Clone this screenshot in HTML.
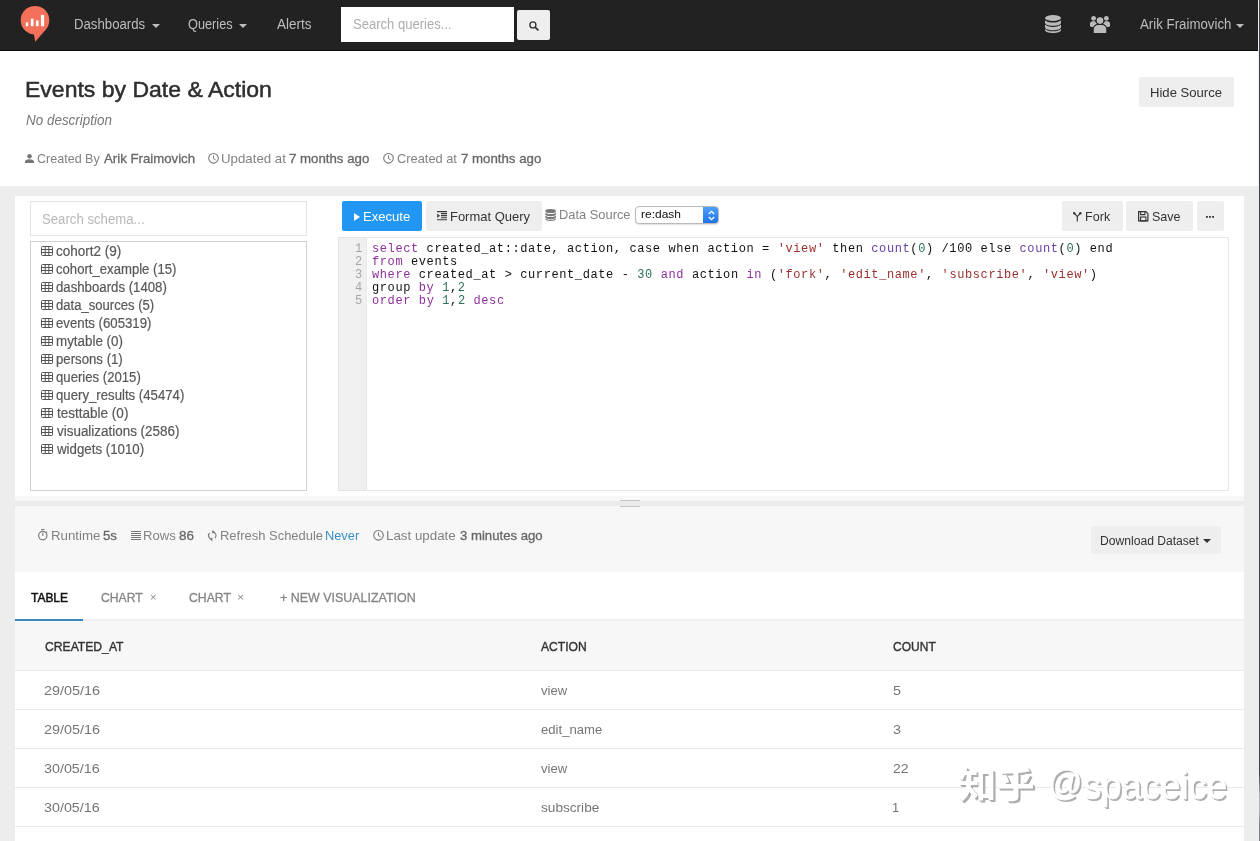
<!DOCTYPE html>
<html lang="en">
<head>
<meta charset="utf-8">
<title>Events by Date &amp; Action</title>
<style>
*{box-sizing:border-box}
html,body{margin:0;padding:0}
body{width:1260px;height:841px;overflow:hidden;position:relative;background:#ededed;font-family:"Liberation Sans",sans-serif;font-size:13px;color:#333}
.a{position:absolute}
.t{position:absolute;white-space:nowrap;line-height:1;transform-origin:0 0}
.m{-webkit-text-stroke:.35px currentColor}
svg{position:absolute;overflow:visible}
.caret{position:absolute;width:0;height:0;border-left:4px solid transparent;border-right:4px solid transparent;border-top:4px solid #bdbdbd}
.btn{position:absolute;background:#eee;border-radius:2px}
.code{position:absolute;left:372px;white-space:pre;font-family:"Liberation Mono",monospace;font-size:12px;letter-spacing:.6px;line-height:13px;color:#111}
.ln{position:absolute;left:338px;width:24.300px;text-align:right;font-family:"Liberation Mono",monospace;font-size:12px;line-height:13px;color:#a6a6a6}
.kw{color:#8f2f9c}.str{color:#9a2f2f}.num{color:#2c6f55}.fn{color:#6a3d9f}
.row{position:absolute;left:15px;width:1229px;height:1px;background:#e9e9e9}
</style>
</head>
<body>
<div id="app" style="position:absolute;left:0;top:0;width:1260px;height:841px;will-change:transform">
<div class="a" style="left:0;top:0;width:1258px;height:51px;background:#222;border-bottom:1px solid #080808"></div>
<svg style="left:19px;top:5px" width="32" height="38" viewBox="0 0 32 38">
<circle cx="16" cy="15.200" r="14.300" fill="#f3705b"/><path d="M14.700 28.500L16.300 36.700 27.200 24z" fill="#f3705b"/>
<rect x="6.800" y="17.300" width="2.400" height="3.900" fill="#fff"/><rect x="11.800" y="13.700" width="2.700" height="7.500" fill="#fff"/>
<rect x="16.900" y="15.500" width="2.700" height="5.700" fill="#fff"/><rect x="21.900" y="9.900" width="3.200" height="11.300" fill="#fff"/></svg>
<span class="t" id="t0" style="left:73.82px;top:17.15px;font-size:14px;color:#bdbdbd;transform:scaleX(0.9424);">Dashboards</span>
<i class="caret" style="left:151.700px;top:23.500px"></i>
<span class="t" id="t1" style="left:187.82px;top:17.15px;font-size:14px;color:#bdbdbd;transform:scaleX(0.9110);">Queries</span>
<i class="caret" style="left:238.700px;top:23.500px"></i>
<span class="t" id="t2" style="left:276.50px;top:17.15px;font-size:14px;color:#bdbdbd;transform:scaleX(0.9645);">Alerts</span>
<div class="a" style="left:341px;top:7px;width:173px;height:35px;background:#fff"></div>
<span class="t" id="t3" style="left:353.30px;top:17.15px;font-size:14px;color:#adadad;transform:scaleX(0.9325);">Search queries...</span>
<div class="btn" style="left:517px;top:10px;width:33px;height:30px"></div>
<svg style="left:528.500px;top:20.500px" width="10" height="10" viewBox="0 0 10 10"><circle cx="3.900" cy="3.900" r="3" fill="none" stroke="#333" stroke-width="1.350"/><path d="M6.100 6.100L9.400 9.400" stroke="#333" stroke-width="1.700"/></svg>
<svg style="left:1045.00px;top:14.50px" width="16" height="18" viewBox="0 0 16 18"><g fill="#bbb"><ellipse cx="8" cy="3" rx="8" ry="3"/><path d="M0 5.200c1.500 1.700 4.500 2.300 8 2.300s6.500-.6 8-2.300v2.600c0 1.700-3.600 3-8 3s-8-1.300-8-3z"/><path d="M0 9.600c1.500 1.700 4.500 2.300 8 2.300s6.500-.6 8-2.300v2.600c0 1.700-3.600 3-8 3s-8-1.300-8-3z"/><path d="M0 14c1.500 1.700 4.500 2.300 8 2.300s6.500-.6 8-2.300v1c0 1.700-3.600 3-8 3s-8-1.300-8-3z"/></g></svg>
<svg style="left:1090px;top:14.500px" width="20" height="18" viewBox="0 0 20 18"><g fill="#bbb">
<circle cx="10" cy="5.600" r="3.300"/><path d="M3.800 18v-3.800c0-2.400 2-4.200 4.300-4.200h3.800c2.300 0 4.300 1.800 4.300 4.200V18z"/>
<circle cx="3.600" cy="3.300" r="2.400"/><circle cx="16.400" cy="3.300" r="2.400"/>
<path d="M0 11.500V8.800c0-1.500 1.200-2.600 2.600-2.600h2.500c.4 1.100 1 2 1.900 2.600C5 9.600 3.600 11 3.200 12.300z"/>
<path d="M20 11.500V8.800c0-1.500-1.200-2.600-2.600-2.600h-2.500c-.4 1.100-1 2-1.900 2.600 2 .8 3.400 2.200 3.800 3.500z"/></g></svg>
<span class="t" id="t4" style="left:1140.00px;top:17.15px;font-size:14px;color:#bdbdbd;transform:scaleX(0.9476);">Arik Fraimovich</span>
<i class="caret" style="left:1236.200px;top:23.500px"></i>
<div class="a" style="left:0;top:51px;width:1258px;height:135px;background:#fff"></div>
<span class="t" id="t5" style="left:24.92px;top:78.97px;font-size:22.6px;color:#2e2e2e;transform:scaleX(1.0184);-webkit-text-stroke:.5px #2e2e2e;">Events by Date &amp; Action</span>
<span class="t" id="t6" style="left:25.52px;top:113.15px;font-size:14px;color:#777;transform:scaleX(0.9603);font-style:italic;">No description</span>
<svg style="left:24.900px;top:153.800px" width="9" height="9" viewBox="0 0 9 9"><circle cx="4.500" cy="2.250" r="2.250" fill="#777"/><path d="M0 9V7.700C0 6.100 3 5.300 4.500 5.300S9 6.100 9 7.700V9z" fill="#777"/></svg>
<span class="t" id="t7" style="left:36.78px;top:152.00px;font-size:13px;color:#828282;transform:scaleX(0.9650);">Created By</span>
<span class="t" id="t8" style="left:103.75px;top:152.00px;font-size:13px;color:#666;transform:scaleX(1.0169);-webkit-text-stroke:.3px #686868;">Arik Fraimovich</span>
<svg style="left:207.90px;top:152.70px" width="11" height="11" viewBox="0 0 11 11"><circle cx="5.500" cy="5.300" r="4.800" fill="none" stroke="#777" stroke-width="1.100"/><path d="M5.500 2.500V5.600L7.700 6.900" fill="none" stroke="#777" stroke-width="1"/></svg>
<span class="t" id="t9" style="left:221.48px;top:152.00px;font-size:13px;color:#828282;transform:scaleX(1.0200);">Updated at</span>
<span class="t" id="t10" style="left:289.49px;top:152.00px;font-size:13px;color:#666;transform:scaleX(1.0192);-webkit-text-stroke:.3px #686868;">7 months ago</span>
<svg style="left:382.90px;top:152.70px" width="11" height="11" viewBox="0 0 11 11"><circle cx="5.500" cy="5.300" r="4.800" fill="none" stroke="#777" stroke-width="1.100"/><path d="M5.500 2.500V5.600L7.700 6.900" fill="none" stroke="#777" stroke-width="1"/></svg>
<span class="t" id="t11" style="left:397.26px;top:152.00px;font-size:13px;color:#828282;transform:scaleX(0.9874);">Created at</span>
<span class="t" id="t12" style="left:460.74px;top:152.00px;font-size:13px;color:#666;transform:scaleX(1.0192);-webkit-text-stroke:.3px #686868;">7 months ago</span>
<div class="btn" style="left:1139px;top:77px;width:95px;height:29.500px"></div>
<span class="t" id="t13" style="left:1150.29px;top:86.00px;font-size:13px;color:#333;transform:scaleX(1.0065);">Hide Source</span>
<div class="a" style="left:15px;top:196px;width:1229px;height:300px;background:#fff"></div>
<div class="a" style="left:30px;top:201px;width:277px;height:35px;border:1px solid #e4e4e4;background:#fff"></div>
<span class="t" id="t14" style="left:42.29px;top:212.40px;font-size:14px;color:#b8b8b8;transform:scaleX(0.9416);">Search schema...</span>
<div class="a" style="left:30px;top:241px;width:277px;height:250px;border:1px solid #d0d0d0;background:#fff"></div>
<svg style="left:41.00px;top:246.00px" width="12" height="10" viewBox="0 0 12 10"><rect x=".5" y=".5" width="11" height="9" rx="1" fill="none" stroke="#555" stroke-width="1"/><path d="M.5 3.500h11M.5 6.500h11M4.200 .5v9M7.800 .5v9" stroke="#555" stroke-width="1" fill="none"/></svg>
<span class="t" id="t15" style="left:56.17px;top:243.95px;font-size:14px;color:#585858;transform:scaleX(0.9639);-webkit-text-stroke:.2px #585858;">cohort2 (9)</span>
<svg style="left:41.00px;top:264.00px" width="12" height="10" viewBox="0 0 12 10"><rect x=".5" y=".5" width="11" height="9" rx="1" fill="none" stroke="#555" stroke-width="1"/><path d="M.5 3.500h11M.5 6.500h11M4.200 .5v9M7.800 .5v9" stroke="#555" stroke-width="1" fill="none"/></svg>
<span class="t" id="t16" style="left:56.18px;top:261.95px;font-size:14px;color:#585858;transform:scaleX(0.9378);-webkit-text-stroke:.2px #585858;">cohort_example (15)</span>
<svg style="left:41.00px;top:282.00px" width="12" height="10" viewBox="0 0 12 10"><rect x=".5" y=".5" width="11" height="9" rx="1" fill="none" stroke="#555" stroke-width="1"/><path d="M.5 3.500h11M.5 6.500h11M4.200 .5v9M7.800 .5v9" stroke="#555" stroke-width="1" fill="none"/></svg>
<span class="t" id="t17" style="left:56.18px;top:279.95px;font-size:14px;color:#585858;transform:scaleX(0.9428);-webkit-text-stroke:.2px #585858;">dashboards (1408)</span>
<svg style="left:41.00px;top:300.00px" width="12" height="10" viewBox="0 0 12 10"><rect x=".5" y=".5" width="11" height="9" rx="1" fill="none" stroke="#555" stroke-width="1"/><path d="M.5 3.500h11M.5 6.500h11M4.200 .5v9M7.800 .5v9" stroke="#555" stroke-width="1" fill="none"/></svg>
<span class="t" id="t18" style="left:56.19px;top:297.95px;font-size:14px;color:#585858;transform:scaleX(0.9349);-webkit-text-stroke:.2px #585858;">data_sources (5)</span>
<svg style="left:41.00px;top:318.00px" width="12" height="10" viewBox="0 0 12 10"><rect x=".5" y=".5" width="11" height="9" rx="1" fill="none" stroke="#555" stroke-width="1"/><path d="M.5 3.500h11M.5 6.500h11M4.200 .5v9M7.800 .5v9" stroke="#555" stroke-width="1" fill="none"/></svg>
<span class="t" id="t19" style="left:56.18px;top:315.95px;font-size:14px;color:#585858;transform:scaleX(0.9434);-webkit-text-stroke:.2px #585858;">events (605319)</span>
<svg style="left:41.00px;top:336.00px" width="12" height="10" viewBox="0 0 12 10"><rect x=".5" y=".5" width="11" height="9" rx="1" fill="none" stroke="#555" stroke-width="1"/><path d="M.5 3.500h11M.5 6.500h11M4.200 .5v9M7.800 .5v9" stroke="#555" stroke-width="1" fill="none"/></svg>
<span class="t" id="t20" style="left:55.94px;top:333.95px;font-size:14px;color:#585858;transform:scaleX(0.9562);-webkit-text-stroke:.2px #585858;">mytable (0)</span>
<svg style="left:41.00px;top:354.00px" width="12" height="10" viewBox="0 0 12 10"><rect x=".5" y=".5" width="11" height="9" rx="1" fill="none" stroke="#555" stroke-width="1"/><path d="M.5 3.500h11M.5 6.500h11M4.200 .5v9M7.800 .5v9" stroke="#555" stroke-width="1" fill="none"/></svg>
<span class="t" id="t21" style="left:55.95px;top:351.95px;font-size:14px;color:#585858;transform:scaleX(0.9430);-webkit-text-stroke:.2px #585858;">persons (1)</span>
<svg style="left:41.00px;top:372.00px" width="12" height="10" viewBox="0 0 12 10"><rect x=".5" y=".5" width="11" height="9" rx="1" fill="none" stroke="#555" stroke-width="1"/><path d="M.5 3.500h11M.5 6.500h11M4.200 .5v9M7.800 .5v9" stroke="#555" stroke-width="1" fill="none"/></svg>
<span class="t" id="t22" style="left:56.18px;top:369.95px;font-size:14px;color:#585858;transform:scaleX(0.9393);-webkit-text-stroke:.2px #585858;">queries (2015)</span>
<svg style="left:41.00px;top:390.00px" width="12" height="10" viewBox="0 0 12 10"><rect x=".5" y=".5" width="11" height="9" rx="1" fill="none" stroke="#555" stroke-width="1"/><path d="M.5 3.500h11M.5 6.500h11M4.200 .5v9M7.800 .5v9" stroke="#555" stroke-width="1" fill="none"/></svg>
<span class="t" id="t23" style="left:56.18px;top:387.95px;font-size:14px;color:#585858;transform:scaleX(0.9425);-webkit-text-stroke:.2px #585858;">query_results (45474)</span>
<svg style="left:41.00px;top:408.00px" width="12" height="10" viewBox="0 0 12 10"><rect x=".5" y=".5" width="11" height="9" rx="1" fill="none" stroke="#555" stroke-width="1"/><path d="M.5 3.500h11M.5 6.500h11M4.200 .5v9M7.800 .5v9" stroke="#555" stroke-width="1" fill="none"/></svg>
<span class="t" id="t24" style="left:56.65px;top:405.95px;font-size:14px;color:#585858;transform:scaleX(0.9658);-webkit-text-stroke:.2px #585858;">testtable (0)</span>
<svg style="left:41.00px;top:426.00px" width="12" height="10" viewBox="0 0 12 10"><rect x=".5" y=".5" width="11" height="9" rx="1" fill="none" stroke="#555" stroke-width="1"/><path d="M.5 3.500h11M.5 6.500h11M4.200 .5v9M7.800 .5v9" stroke="#555" stroke-width="1" fill="none"/></svg>
<span class="t" id="t25" style="left:56.65px;top:423.95px;font-size:14px;color:#585858;transform:scaleX(0.9594);-webkit-text-stroke:.2px #585858;">visualizations (2586)</span>
<svg style="left:41.00px;top:444.00px" width="12" height="10" viewBox="0 0 12 10"><rect x=".5" y=".5" width="11" height="9" rx="1" fill="none" stroke="#555" stroke-width="1"/><path d="M.5 3.500h11M.5 6.500h11M4.200 .5v9M7.800 .5v9" stroke="#555" stroke-width="1" fill="none"/></svg>
<span class="t" id="t26" style="left:56.89px;top:441.95px;font-size:14px;color:#585858;transform:scaleX(0.9490);-webkit-text-stroke:.2px #585858;">widgets (1010)</span>
<div class="a" style="left:342px;top:201px;width:80px;height:30px;background:#2196f3;border-radius:2px"></div>
<svg style="left:354px;top:212.500px" width="6" height="8" viewBox="0 0 6 8"><path d="M0 0L6 4 0 8z" fill="#fff"/></svg>
<span class="t" id="t27" style="left:362.74px;top:210.25px;font-size:13px;color:#fff;transform:scaleX(1.0055);">Execute</span>
<div class="btn" style="left:426px;top:201px;width:115.500px;height:30px"></div>
<svg style="left:436.800px;top:211.200px" width="10" height="9.400" viewBox="0 0 10 9.400"><path d="M0 .6h10M4 2.650h6M4 4.700h6M4 6.750h6M0 8.800h10" stroke="#3a3a3a" stroke-width="1.150"/><path d="M.2 2.400L3 4.700 .2 7z" fill="#3a3a3a"/></svg>
<span class="t" id="t28" style="left:449.75px;top:210.25px;font-size:13px;color:#333;transform:scaleX(0.9968);">Format Query</span>
<svg style="left:545.00px;top:208.75px" width="11.25" height="12" viewBox="0 0 16 18"><g fill="#777"><ellipse cx="8" cy="3" rx="8" ry="3"/><path d="M0 5.200c1.500 1.700 4.500 2.300 8 2.300s6.500-.6 8-2.300v2.600c0 1.700-3.600 3-8 3s-8-1.300-8-3z"/><path d="M0 9.600c1.500 1.700 4.500 2.300 8 2.300s6.500-.6 8-2.300v2.600c0 1.700-3.600 3-8 3s-8-1.300-8-3z"/><path d="M0 14c1.500 1.700 4.500 2.300 8 2.300s6.500-.6 8-2.300v1c0 1.700-3.600 3-8 3s-8-1.300-8-3z"/></g></svg>
<span class="t" id="t29" style="left:559.01px;top:208.25px;font-size:13px;color:#828282;transform:scaleX(0.9894);">Data Source</span>
<div class="a" style="left:634.500px;top:206px;width:84.500px;height:18px;border:1px solid #b9b9b9;border-radius:4px;background:#fff;box-shadow:0 1px 1px rgba(0,0,0,.12);overflow:hidden"><div class="a" style="right:0;top:0;width:15px;height:16px;background:linear-gradient(#4ea0f7,#1f73e8)"></div><svg style="right:3.500px;top:2.500px" width="7" height="11" viewBox="0 0 7 11"><path d="M.8 4L3.500 1.300 6.200 4M.8 7L3.500 9.700 6.200 7" fill="none" stroke="#fff" stroke-width="1.300"/></svg></div>
<span class="t" id="t30" style="left:641.33px;top:209.39px;font-size:11px;color:#111;transform:scaleX(1.0894);">re:dash</span>
<div class="btn" style="left:1061.500px;top:201px;width:61px;height:29.500px"></div>
<svg style="left:1072.800px;top:211.500px" width="8.600" height="9.500" viewBox="0 0 8.600 9.500"><path d="M1.200 1.200L4.300 4.600V9.500M7.400 1.200L4.300 4.600" fill="none" stroke="#333" stroke-width="1.150"/><circle cx="1.200" cy="1.200" r="1.200" fill="#333"/><circle cx="7.400" cy="1.200" r="1.200" fill="#333"/></svg>
<span class="t" id="t31" style="left:1084.88px;top:210.25px;font-size:13px;color:#333;transform:scaleX(0.9680);">Fork</span>
<div class="btn" style="left:1126.200px;top:201px;width:66.800px;height:29.500px"></div>
<svg style="left:1138px;top:211.200px" width="10.500" height="10.500" viewBox="0 0 10.500 10.500"><path d="M.6 .6H7.800L9.900 2.700V9.900H.6z" fill="none" stroke="#333" stroke-width="1.200"/><path d="M2.600 .6V3.600H6.900V.6" fill="none" stroke="#333" stroke-width="1.100"/><rect x="2.600" y="6" width="5.300" height="3.900" fill="none" stroke="#333" stroke-width="1.100"/></svg>
<span class="t" id="t32" style="left:1152.13px;top:210.25px;font-size:13px;color:#333;transform:scaleX(0.9628);">Save</span>
<div class="btn" style="left:1196.500px;top:201px;width:27.500px;height:29.500px"></div>
<svg style="left:1206.300px;top:215.600px" width="8" height="1.800" viewBox="0 0 8 1.800"><rect x="0" y="0" width="1.800" height="1.800" fill="#333"/><rect x="3.100" y="0" width="1.800" height="1.800" fill="#333"/><rect x="6.200" y="0" width="1.800" height="1.800" fill="#333"/></svg>
<div class="a" style="left:337.500px;top:236.500px;width:891px;height:254px;border:1px solid #e6e6e6;background:#fff"></div>
<div class="a" style="left:338.500px;top:237.500px;width:28px;height:252px;background:#f0f0f0;border-right:1px solid #e9e9e9"></div>
<div class="ln" style="top:243.0px">1</div>
<div class="code" style="top:243.0px"><span class="kw">select</span> created_at::date, action, case when action = <span class="str">'view'</span> then <span class="fn">count</span>(<span class="num">0</span>) /100 else <span class="fn">count</span>(<span class="num">0</span>) end</div>
<div class="ln" style="top:256.0px">2</div>
<div class="code" style="top:256.0px"><span class="kw">from</span> events</div>
<div class="ln" style="top:269.0px">3</div>
<div class="code" style="top:269.0px"><span class="kw">where</span> created_at &gt; current_date - <span class="num">30</span> <span class="kw">and</span> action <span class="kw">in</span> (<span class="str">'fork'</span>, <span class="str">'edit_name'</span>, <span class="str">'subscribe'</span>, <span class="str">'view'</span>)</div>
<div class="ln" style="top:282.0px">4</div>
<div class="code" style="top:282.0px">group <span class="kw">by</span> <span class="num">1</span>,<span class="num">2</span></div>
<div class="ln" style="top:295.0px">5</div>
<div class="code" style="top:295.0px"><span class="kw">order</span> <span class="kw">by</span> <span class="num">1</span>,<span class="num">2</span> <span class="kw">desc</span></div>
<div class="a" style="left:15px;top:496px;width:1229px;height:345px;background:#f7f7f7"></div>
<div class="a" style="left:15px;top:500.500px;width:1229px;height:5.500px;background:#ebebeb"></div>
<div class="a" style="left:620px;top:500px;width:20px;height:1px;background:#c4c4c4"></div><div class="a" style="left:620px;top:506px;width:20px;height:1px;background:#c4c4c4"></div>
<svg style="left:38px;top:529px" width="10" height="11.500" viewBox="0 0 10 11.500"><circle cx="4.800" cy="6.600" r="4.200" fill="none" stroke="#777" stroke-width="1.150"/><path d="M3 .55h3.600M4.800 3.800V6.900M8.200 2.600l.9 .9" stroke="#777" stroke-width="1.100" fill="none"/></svg>
<span class="t" id="t33" style="left:50.73px;top:529.00px;font-size:13px;color:#828282;transform:scaleX(1.0214);">Runtime</span>
<span class="t" id="t34" style="left:103.24px;top:529.00px;font-size:13px;color:#666;transform:scaleX(1.0192);-webkit-text-stroke:.3px #686868;">5s</span>
<svg style="left:130.750px;top:530.500px" width="10" height="9" viewBox="0 0 10 9"><path d="M0 .5h10M0 2.500h10M0 4.500h10M0 6.500h10M0 8.500h10" stroke="#777" stroke-width="1"/></svg>
<span class="t" id="t35" style="left:143.49px;top:529.00px;font-size:13px;color:#828282;transform:scaleX(1.0081);">Rows</span>
<span class="t" id="t36" style="left:179.48px;top:529.00px;font-size:13px;color:#666;transform:scaleX(1.0370);-webkit-text-stroke:.3px #686868;">86</span>
<svg style="left:207.800px;top:529.500px" width="9" height="11.200" viewBox="0 0 9 11.200"><path d="M4.300 1.900A3.700 3.700 0 0 1 7 8.200M4.300 9.300A3.700 3.700 0 0 1 1.600 3" fill="none" stroke="#777" stroke-width="1.150"/><path d="M4.300 0L6.700 1.900 4.300 3.800zM4.300 7.400L1.900 9.300 4.300 11.200z" fill="#777"/></svg>
<span class="t" id="t37" style="left:219.50px;top:529.00px;font-size:13px;color:#828282;transform:scaleX(0.9975);">Refresh Schedule</span>
<span class="t" id="t38" style="left:325.26px;top:529.00px;font-size:13px;color:#3a8fc7;transform:scaleX(0.9851);">Never</span>
<svg style="left:372.70px;top:529.60px" width="11" height="11" viewBox="0 0 11 11"><circle cx="5.500" cy="5.300" r="4.800" fill="none" stroke="#777" stroke-width="1.100"/><path d="M5.500 2.500V5.600L7.700 6.900" fill="none" stroke="#777" stroke-width="1"/></svg>
<span class="t" id="t39" style="left:386.47px;top:529.00px;font-size:13px;color:#828282;transform:scaleX(1.0264);">Last update</span>
<span class="t" id="t40" style="left:459.75px;top:529.00px;font-size:13px;color:#666;transform:scaleX(1.0123);-webkit-text-stroke:.3px #686868;">3 minutes ago</span>
<div class="btn" style="left:1091px;top:526px;width:130px;height:28px"></div>
<span class="t" id="t41" style="left:1100.34px;top:534.84px;font-size:12px;color:#333;transform:scaleX(1.0093);">Download Dataset</span>
<i class="caret" style="left:1203.200px;top:538.500px;border-top-color:#333"></i>
<div class="a" style="left:15px;top:572px;width:1229px;height:47px;background:#fff"></div>
<div class="a" style="left:15px;top:619px;width:1229px;height:2px;background:#eee"></div>
<div class="a" style="left:15px;top:619px;width:68px;height:2px;background:#3a87bd"></div>
<span class="t" id="t42" style="left:31.00px;top:590.80px;font-size:13px;color:#111;transform:scaleX(0.9200);-webkit-text-stroke:.5px #111;">TABLE</span>
<span class="t" id="t43" style="left:101.18px;top:590.80px;font-size:13px;color:#858585;transform:scaleX(0.9371);-webkit-text-stroke:.3px #858585;">CHART</span>
<span class="t" id="t44" style="left:149.88px;top:592.93px;font-size:10px;color:#8c8c8c;transform:scaleX(1.1111);">&times;</span>
<span class="t" id="t45" style="left:188.88px;top:590.80px;font-size:13px;color:#858585;transform:scaleX(0.9409);-webkit-text-stroke:.3px #858585;">CHART</span>
<span class="t" id="t46" style="left:237.22px;top:592.93px;font-size:10px;color:#8c8c8c;transform:scaleX(1.2235);">&times;</span>
<span class="t" id="t47" style="left:280.17px;top:590.80px;font-size:13px;color:#858585;transform:scaleX(0.9576);-webkit-text-stroke:.3px #858585;">+ NEW VISUALIZATION</span>
<div class="a" style="left:15px;top:671px;width:1229px;height:170px;background:#fff"></div>
<div class="row" style="top:670px"></div>
<div class="row" style="top:709px"></div>
<div class="row" style="top:748px"></div>
<div class="row" style="top:787px"></div>
<div class="row" style="top:826px"></div>
<span class="t" id="t48" style="left:44.53px;top:640.20px;font-size:13px;color:#333;transform:scaleX(0.9341);-webkit-text-stroke:.4px #333;">CREATED_AT</span>
<span class="t" id="t49" style="left:541.39px;top:640.20px;font-size:13px;color:#333;transform:scaleX(0.9320);-webkit-text-stroke:.4px #333;">ACTION</span>
<span class="t" id="t50" style="left:892.73px;top:640.20px;font-size:13px;color:#333;transform:scaleX(0.9246);-webkit-text-stroke:.4px #333;">COUNT</span>
<span class="t" id="t51" style="left:44.17px;top:683.70px;font-size:13px;color:#757575;transform:scaleX(1.1066);">29/05/16</span>
<span class="t" id="t52" style="left:541.15px;top:683.70px;font-size:13px;color:#757575;transform:scaleX(1.0038);">view</span>
<span class="t" id="t53" style="left:892.80px;top:683.70px;font-size:13px;color:#757575;transform:scaleX(1.1040);">5</span>
<span class="t" id="t54" style="left:44.17px;top:722.70px;font-size:13px;color:#757575;transform:scaleX(1.1066);">29/05/16</span>
<span class="t" id="t55" style="left:540.64px;top:722.70px;font-size:13px;color:#757575;transform:scaleX(1.0101);">edit_name</span>
<span class="t" id="t56" style="left:892.80px;top:722.70px;font-size:13px;color:#757575;transform:scaleX(1.1040);">3</span>
<span class="t" id="t57" style="left:44.45px;top:761.70px;font-size:13px;color:#757575;transform:scaleX(1.1010);">30/05/16</span>
<span class="t" id="t58" style="left:541.15px;top:761.70px;font-size:13px;color:#757575;transform:scaleX(1.0038);">view</span>
<span class="t" id="t59" style="left:892.55px;top:761.70px;font-size:13px;color:#757575;transform:scaleX(1.0769);">22</span>
<span class="t" id="t60" style="left:44.45px;top:800.70px;font-size:13px;color:#757575;transform:scaleX(1.1010);">30/05/16</span>
<span class="t" id="t61" style="left:540.62px;top:800.70px;font-size:13px;color:#757575;transform:scaleX(1.0477);">subscribe</span>
<span class="t" id="t62" style="left:892.36px;top:800.70px;font-size:13px;color:#757575;transform:scaleX(0.9913);">1</span>
<span class="t" id="t63" style="left:957.70px;top:767.53px;font-size:36px;color:#fff;font-weight:bold;font-family:'Liberation Sans','Noto Sans CJK SC',sans-serif;transform:scaleX(1.0652);text-shadow:2px 2px 0 #adadad,1px 1px 0 #adadad;">知乎</span>
<span class="t" id="t64" style="left:1047.64px;top:764.73px;font-size:36px;color:#fff;transform:scaleX(0.9440);-webkit-text-stroke:.6px #fff;text-shadow:2px 2px 0 #adadad,1px 1px 0 #adadad;">@</span>
<span class="t" id="t65" style="left:1083.28px;top:766.53px;font-size:38px;color:#fff;transform:scaleX(0.9615);-webkit-text-stroke:.6px #fff;text-shadow:2px 2px 0 #adadad,1px 1px 0 #adadad;">spaceice</span>
<div class="a" style="left:1258.500px;top:0;width:1.500px;height:841px;background:linear-gradient(#4a4d50 0,#3f4449 6%,#3f4449 92%,#aab1b8 94.500%,#aab1b8 96.500%,#7d8287 98%,#7d8287 100%)"></div>
</div>
</body>
</html>
